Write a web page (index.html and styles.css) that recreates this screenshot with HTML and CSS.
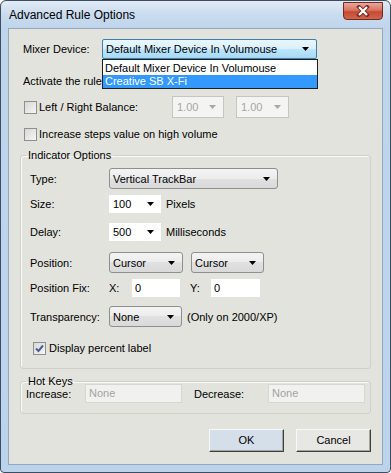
FILE: index.html
```html
<!DOCTYPE html>
<html><head>
  <meta charset="UTF-8">
  <title>Advanced Rule Options</title>
  <link rel="stylesheet" href="styles.css">
</head><body>
<div id="window">
  <div id="titlebar">
    <span class="caption">Advanced Rule Options</span>
    <div class="closebtn">
      <svg width="14" height="12" viewBox="0 0 14 12"><path d="M3 2L11 10M11 2L3 10" stroke="#7a2d22" stroke-width="4" stroke-linecap="square"/><path d="M3 2L11 10M11 2L3 10" stroke="#fff" stroke-width="2.2"/></svg>
    </div>
  </div>
  <div id="client">
    <div class="row r-mixer">
      <span class="lbl w79">Mixer Device:</span>
      <div class="dropwrap">
        <div class="combo focus w215"><span>Default Mixer Device In Volumouse</span><svg class="arr" width="7" height="4"><path d="M0 0h7L3.5 4z"/></svg></div>
        <ul class="droplist">
          <li>Default Mixer Device In Volumouse</li>
          <li class="sel">Creative SB X-Fi</li>
        </ul>
      </div>
    </div>
    <div class="row r-activate">Activate the rule</div>
    <div class="row r-balance">
      <span class="chk"></span><span class="lbl w133">Left / Right Balance:</span>
      <div class="combo disabled w52"><span>1.00</span><svg class="arr" width="7" height="4"><path d="M0 0h7L3.5 4z"/></svg></div>
      <div class="combo disabled w53 gap12"><span>1.00</span><svg class="arr" width="7" height="4"><path d="M0 0h7L3.5 4z"/></svg></div>
    </div>
    <div class="row r-increase">
      <span class="chk"></span><span class="lbl">Increase steps value on high volume</span>
    </div>

    <fieldset class="group g-indicator">
      <legend>Indicator Options</legend>
      <div class="row r-type">
        <span class="lbl w79">Type:</span>
        <div class="combo btn w169"><span>Vertical TrackBar</span><svg class="arr" width="7" height="4"><path d="M0 0h7L3.5 4z"/></svg></div>
      </div>
      <div class="row r-size">
        <span class="lbl w79">Size:</span>
        <div class="combo plain w52"><span>100</span><svg class="arr" width="7" height="4"><path d="M0 0h7L3.5 4z"/></svg></div>
        <span class="unit">Pixels</span>
      </div>
      <div class="row r-delay">
        <span class="lbl w79">Delay:</span>
        <div class="combo plain w52"><span>500</span><svg class="arr" width="7" height="4"><path d="M0 0h7L3.5 4z"/></svg></div>
        <span class="unit">Milliseconds</span>
      </div>
      <div class="row r-position">
        <span class="lbl w79">Position:</span>
        <div class="combo btn w74"><span>Cursor</span><svg class="arr" width="7" height="4"><path d="M0 0h7L3.5 4z"/></svg></div>
        <div class="combo btn w73 gap8"><span>Cursor</span><svg class="arr" width="7" height="4"><path d="M0 0h7L3.5 4z"/></svg></div>
      </div>
      <div class="row r-fix">
        <span class="lbl w79">Position Fix:</span>
        <span class="lbl w23">X:</span>
        <div class="edit w48">0</div>
        <span class="lbl w21 gap10">Y:</span>
        <div class="edit w49">0</div>
      </div>
      <div class="row r-transp">
        <span class="lbl w79">Transparency:</span>
        <div class="combo btn w73"><span>None</span><svg class="arr" width="7" height="4"><path d="M0 0h7L3.5 4z"/></svg></div>
        <span class="unit">(Only on 2000/XP)</span>
      </div>
      <div class="row r-percent">
        <span class="chk checked"><svg width="11" height="11" viewBox="0 0 11 11"><path d="M2 5.5L4.5 8L9 2.5" fill="none" stroke="#4a5f9a" stroke-width="2"/></svg></span>
        <span class="lbl">Display percent label</span>
      </div>
    </fieldset>

    <fieldset class="group g-hotkeys">
      <legend>Hot Keys</legend>
      <div class="row r-hotkeys">
        <span class="lbl w59">Increase:</span>
        <div class="edit off w97">None</div>
        <span class="lbl w74 gap12">Decrease:</span>
        <div class="edit off w97">None</div>
      </div>
    </fieldset>

    <div class="buttons">
      <div class="button default">OK</div>
      <div class="button">Cancel</div>
    </div>
  </div>
</div>
</body>
</html>
```

FILE: styles.css
```css
html,body{
  margin:0;
  height:100%;
  overflow:hidden;
}
body{
  font-family:"Liberation Sans",Arial,sans-serif;
  font-size:11px;
  color:#000;
}
#window{
  box-sizing:border-box;
  width:391px;
  height:473px;
  border:1px solid #3c4d62;
  border-radius:6px 6px 4px 4px;
  background:linear-gradient(#e1ebf6,#c9dbee 14px,#bfd5ec 27px,#bcd3ec);
  padding:0 7px 7px;
  display:flex;
  flex-direction:column;
}
#titlebar{
  height:27px;
  display:flex;
  justify-content:space-between;
  align-items:flex-start;
}
.caption{
  font-size:12px;
  line-height:29px;
  padding-left:1px;
}
.closebtn{
  box-sizing:border-box;
  width:40px;
  height:18px;
  margin-top:1px;
  border:1px solid #6e2b21;
  border-radius:0 0 4px 4px;
  background:linear-gradient(#e9a89c,#d9735f 45%,#c74a33 55%,#d0644d);
  display:flex;
  align-items:center;
  justify-content:center;
}
#client{
  flex:1;
  background:#e2e3dc;
  border:1px solid #93a7bd;
  padding:0 11px 0 11px;
}

.row{
  display:flex;
  align-items:center;
}
.lbl{flex:none;}
.w21{width:21px;}
.w23{width:23px;}
.w48{width:48px;}
.w49{width:49px;}
.w52{width:52px;}
.w53{width:53px;}
.w59{width:59px;}
.w73{width:73px;}
.w74{width:74px;}
.w79{width:79px;}
.w97{width:97px;}
.w133{width:133px;}
.w169{width:169px;}
.w215{width:215px;}
.gap8{margin-left:8px;}
.gap10{margin-left:10px;}
.gap12{margin-left:12px;}
.unit{margin-left:5px;}

.r-mixer{margin-top:10px;height:20px;padding-left:3px;}
.r-activate{margin-top:13px;height:18px;padding-left:3px;}
.r-balance{margin-top:6px;height:22px;padding-left:3px;}
.r-increase{margin-top:7px;height:18px;padding-left:3px;}

.combo{
  box-sizing:border-box;
  display:flex;
  align-items:center;
  justify-content:space-between;
  padding:0 7px 0 3px;
  flex:none;
}
.combo .arr{fill:#000;}
.combo.focus{
  height:20px;
  border:1px solid #3c7fb1;
  border-radius:2px;
  background:linear-gradient(#eaf6fd,#d9f0fc 50%,#bee6fd 50%,#a7d9f5);
}
.combo.btn{
  height:21px;
  border:1px solid #8e8f8f;
  border-radius:3px;
  background:linear-gradient(#f4f4f4,#ececec 50%,#e1e1e1 50%,#d9d9d9);
}
.combo.plain{
  height:18px;
  background:#fff;
  padding-left:4px;
}
.combo.disabled{
  height:22px;
  border:1px solid #c5c5c1;
  background:#f4f4f2;
  color:#a6a6a6;
  padding-left:4px;
}
.combo.disabled .arr{fill:#a8a8a8;}

.dropwrap{position:relative;}
.droplist{
  position:absolute;
  top:100%;
  left:0;
  width:216px;
  box-sizing:border-box;
  margin:0;
  padding:2px 0 0;
  list-style:none;
  background:#fff;
  border:1px solid #1f1f1f;
  z-index:2;
}
.droplist li{
  line-height:13px;
  height:13px;
  padding-left:2px;
  white-space:nowrap;
}
.droplist li.sel{
  background:#3399ff;
  color:#fff;
}

.chk{
  box-sizing:border-box;
  width:13px;
  height:13px;
  flex:none;
  margin-left:1px;
  margin-right:2px;
  border:1px solid #8f8f8f;
  background:linear-gradient(135deg,#d8d8d8,#f6f6f6);
  display:flex;
  align-items:center;
  justify-content:center;
}

.group{
  margin:5px 0 0;
  padding:0;
  border:1px solid #cfd0c8;
  border-radius:3px;
  box-shadow:inset 1px 1px #fafaf8;
}
.group legend{
  margin-left:5px;
  padding:0 2px;
  line-height:14px;
}
.g-indicator{padding-bottom:13px;}
.g-indicator .row{padding-left:9px;}
.r-type{margin-top:6px;height:21px;}
.r-size{margin-top:5px;height:20px;}
.r-delay{margin-top:8px;height:20px;}
.r-position{margin-top:10px;height:21px;}
.r-fix{margin-top:5px;height:20px;}
.r-transp{margin-top:8px;height:21px;}
.r-percent{margin-top:14px;height:14px;}
.r-percent .chk{margin-left:3px;margin-right:3px;}

.edit{
  box-sizing:border-box;
  height:18px;
  line-height:18px;
  padding-left:3px;
  background:#fff;
  flex:none;
}
.edit.off{
  height:19px;
  line-height:17px;
  background:#f1f1ef;
  border:1px solid #d6d6d2;
  color:#a3a3a3;
}

.g-hotkeys{padding-bottom:10px;}
.r-hotkeys{margin-top:-4px;height:19px;padding-left:5px;}

.buttons{
  display:flex;
  justify-content:flex-end;
  gap:12px;
  margin-top:15px;
}
.button{
  box-sizing:border-box;
  width:75px;
  height:23px;
  line-height:21px;
  text-align:center;
  border:1px solid;
  border-color:#f8f8f8 #3f3f3f #3f3f3f #f8f8f8;
  box-shadow:inset -1px -1px #a3a3a0;
  background:#e7e7e3;
}
.button.default{background:#d5dfea;}
```
